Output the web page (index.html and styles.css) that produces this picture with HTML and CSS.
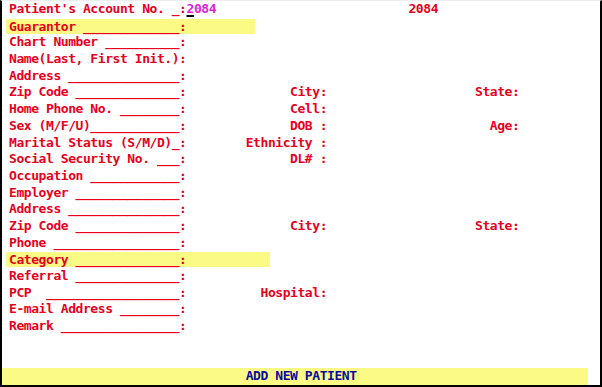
FILE: index.html
```html
<!DOCTYPE html>
<html lang="en">
<head>
    <meta charset="UTF-8">
    <title>Add New Patient</title>
    <link rel="stylesheet" href="styles.css">
</head>
<body>
    <div class="screen">
        <div class="row">Patient's Account No. _:<span class="acct"><span class="cursor">2</span>084</span>                          2084</div>
        <div class="row"><span class="hl hl-short">Guarantor _____________:</span></div>
        <div class="row">Chart Number __________:</div>
        <div class="row">Name(Last, First Init.):</div>
        <div class="row">Address _______________:</div>
        <div class="row">Zip Code ______________:              City:                    State:</div>
        <div class="row">Home Phone No. ________:              Cell:</div>
        <div class="row">Sex (M/F/U)____________:              DOB :                      Age:</div>
        <div class="row">Marital Status (S/M/D)_:        Ethnicity :</div>
        <div class="row">Social Security No. ___:              DL# :</div>
        <div class="row">Occupation ____________:</div>
        <div class="row">Employer ______________:</div>
        <div class="row">Address _______________:</div>
        <div class="row">Zip Code ______________:              City:                    State:</div>
        <div class="row">Phone _________________:</div>
        <div class="row"><span class="hl hl-long">Category ______________:</span></div>
        <div class="row">Referral ______________:</div>
        <div class="row">PCP  __________________:          Hospital:</div>
        <div class="row">E-mail Address ________:</div>
        <div class="row">Remark ________________:</div>
        <div class="row footer">                                ADD NEW PATIENT</div>
    </div>
</body>
</html>
```

FILE: styles.css
```css
body {
    margin: 0;
    background: #fff;
}
.screen {
    width: 602px;
    height: 387px;
    box-sizing: border-box;
    border-left: 2px solid #000;
    border-right: 2px solid #000;
    border-bottom: 2px solid #000;
    border-top: 1px solid #eee;
    padding-left: 7px;
    display: flex;
    flex-direction: column;
    font-family: "DejaVu Sans Mono", monospace;
    font-weight: bold;
    font-size: 13px;
    letter-spacing: -0.43px;
    color: #e8001c;
}
.row {
    height: 16.7px;
    line-height: 16.7px;
    white-space: pre;
}
.acct {
    color: #e01ee0;
}
.cursor {
    text-decoration: underline;
    text-decoration-color: #000;
    text-decoration-thickness: 2px;
    text-underline-offset: 2px;
}
.hl {
    display: inline-block;
    background: #fafa84;
    margin-left: -3px;
    padding-left: 3px;
    height: 15px;
    line-height: 16px;
    margin-top: 1px;
    vertical-align: top;
}
.hl-short {
    width: 246px;
}
.hl-long {
    width: 261px;
}
.footer {
    margin-top: auto;
    margin-left: -7px;
    padding-left: 7px;
    width: 579px;
    background: #fafa84;
    color: #0a0aa0;
}
```
